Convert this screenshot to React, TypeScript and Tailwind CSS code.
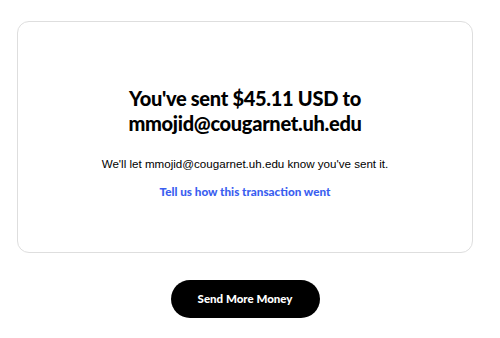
const App = () => {
  return (
    <div className="min-h-screen bg-white w-[490px] px-[17px] pt-[21px] flex flex-col items-center" style={{ fontFamily: '"Liberation Sans", Arial, sans-serif' }}>
      {/* Confirmation card */}
      <div className="w-full border border-[#dedede] rounded-[12px] pt-[64px] pb-[53px] flex flex-col items-center text-center">
        <h1 className="font-['Lato',sans-serif] font-black text-[20px] leading-[25px] text-black tracking-[-0.3px]">
          You've sent $45.11 USD to
          <br />
          mmojid@cougarnet.uh.edu
        </h1>
        <p className="mt-[20px] text-[11.6px] leading-[16px] text-black">
          We'll let mmojid@cougarnet.uh.edu know you've sent it.
        </p>
        <a href="#" className="mt-[11px] font-['Lato',sans-serif] font-black text-[11.7px] leading-[16px] text-[#3a5ef0]">
          Tell us how this transaction went
        </a>
      </div>

      <button className="mt-[27px] w-[149px] h-[38px] rounded-full bg-black text-white font-['Lato',sans-serif] font-black text-[11.5px]">
        Send More Money
      </button>
    </div>
  );
};

export default App;
